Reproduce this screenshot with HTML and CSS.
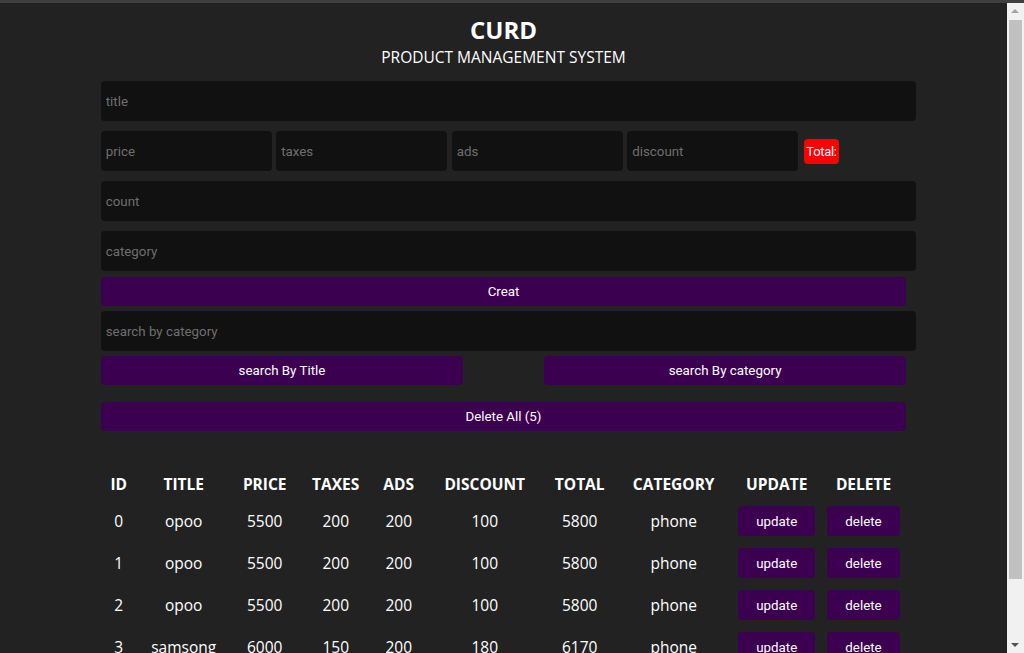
FILE: index.html
```html
<!DOCTYPE html>
<html lang="en">
<head>
<meta charset="utf-8">
<title>CURD</title>
<link rel="stylesheet" href="styles.css">
</head>
<body>
<div class="topline"></div>
<div class="scrollbar" aria-hidden="true">
  <span class="arrow arrow-up"></span>
  <span class="thumb"></span>
  <span class="arrow arrow-down"></span>
</div>
<div class="page">
  <div class="crud">
    <div class="head">
      <h2 class="brand">CURD</h2>
      <p class="subtitle">PRODUCT MANAGEMENT SYSTEM</p>
    </div>
    <div class="inputs">
      <input class="field" type="text" placeholder="title">
      <div class="price">
        <input class="field small" type="text" placeholder="price">
        <input class="field small" type="text" placeholder="taxes">
        <input class="field small" type="text" placeholder="ads">
        <input class="field small" type="text" placeholder="discount">
        <small class="total">Total:</small>
      </div>
      <input class="field" type="text" placeholder="count">
      <input class="field field-last" type="text" placeholder="category">
      <button class="btn btn-create">Creat</button>
    </div>
    <div class="outputs">
      <input class="field search" type="text" placeholder="search by category">
      <div class="btn-search">
        <button class="btn half">search By Title</button>
        <button class="btn half">search By category</button>
      </div>
      <button class="btn btn-delete-all">Delete All (5)</button>
      <table class="list">
        <colgroup>
          <col class="c-id"><col class="c-title"><col class="c-price"><col class="c-taxes"><col class="c-ads">
          <col class="c-discount"><col class="c-total"><col class="c-category"><col class="c-update"><col class="c-delete">
        </colgroup>
        <thead>
          <tr>
            <th>ID</th><th>TITLE</th><th>PRICE</th><th>TAXES</th><th>ADS</th><th>DISCOUNT</th><th>TOTAL</th><th>CATEGORY</th><th>UPDATE</th><th>DELETE</th>
          </tr>
        </thead>
        <tbody>
          <tr><td>0</td><td>opoo</td><td>5500</td><td>200</td><td>200</td><td>100</td><td>5800</td><td>phone</td><td><button class="btn row-btn">update</button></td><td><button class="btn row-btn">delete</button></td></tr>
          <tr><td>1</td><td>opoo</td><td>5500</td><td>200</td><td>200</td><td>100</td><td>5800</td><td>phone</td><td><button class="btn row-btn">update</button></td><td><button class="btn row-btn">delete</button></td></tr>
          <tr><td>2</td><td>opoo</td><td>5500</td><td>200</td><td>200</td><td>100</td><td>5800</td><td>phone</td><td><button class="btn row-btn">update</button></td><td><button class="btn row-btn">delete</button></td></tr>
          <tr><td>3</td><td>samsong</td><td>6000</td><td>150</td><td>200</td><td>180</td><td>6170</td><td>phone</td><td><button class="btn row-btn">update</button></td><td><button class="btn row-btn">delete</button></td></tr>
          <tr><td>4</td><td>samsong</td><td>6000</td><td>150</td><td>200</td><td>180</td><td>6170</td><td>phone</td><td><button class="btn row-btn">update</button></td><td><button class="btn row-btn">delete</button></td></tr>
        </tbody>
      </table>
    </div>
  </div>
</div>
</body>
</html>
```
FILE: styles.css
```css
* {
  margin: 0;
  padding: 0;
}

html, body {
  background: #222222;
}

body {
  color: #ffffff;
  font-family: "Open Sans", "Noto Sans", sans-serif;
}

.topline {
  position: fixed;
  top: 0;
  left: 0;
  right: 0;
  height: 3px;
  background: #3f3f41;
  z-index: 3;
}

.scrollbar {
  position: fixed;
  top: 3px;
  right: 0;
  bottom: 0;
  width: 17px;
  background: #f1f1f1;
  z-index: 2;
}

.thumb {
  position: absolute;
  left: 2px;
  right: 2px;
  top: 17px;
  height: 559px;
  background: #c1c1c1;
}

.arrow {
  position: absolute;
  left: 4px;
  width: 0;
  height: 0;
  border-left: 4px solid transparent;
  border-right: 4px solid transparent;
}

.arrow-up {
  top: 6px;
  border-bottom: 4px solid #a3a3a3;
}

.arrow-down {
  bottom: 6px;
  border-top: 4px solid #505050;
}

.page {
  margin-right: 17px;
  padding-top: 3px;
}

.crud {
  width: 80%;
  margin: 0 auto;
  padding-bottom: 13px;
}

.head {
  text-align: center;
  padding-top: 11px;
}

.brand {
  font-size: 24px;
  font-weight: 700;
  line-height: 32px;
}

.subtitle {
  font-size: 15.5px;
  line-height: 22px;
}

.inputs {
  margin-top: 13px;
}

.field {
  display: block;
  box-sizing: content-box;
  width: 100%;
  height: 30px;
  padding: 5px;
  border: none;
  outline: none;
  border-radius: 4px;
  background: #111111;
  color: #ffffff;
  font-family: Roboto, "Liberation Sans", sans-serif;
  font-size: 13.33px;
  margin-bottom: 10px;
}

.field::placeholder {
  color: #6f6f6f;
}

.price {
  display: flex;
  align-items: center;
  gap: 4.4px;
  height: 40px;
  margin-bottom: 10px;
}

.field.small {
  width: 20%;
  flex-shrink: 0;
  margin-bottom: 0;
}

.total {
  margin-left: 1.6px;
  background: #ff0000;
  color: #ffffff;
  font-family: Roboto, "Liberation Sans", sans-serif;
  font-size: 13px;
  letter-spacing: -0.3px;
  line-height: 17px;
  padding: 4px 2px;
  border-radius: 4px;
}

.field-last {
  margin-bottom: 6px;
}

.btn {
  border: none;
  border-radius: 4px;
  background: #3c0050;
  color: #ffffff;
  font-family: Roboto, "Liberation Sans", sans-serif;
  font-size: 13.33px;
  cursor: pointer;
}

.btn-create,
.btn-delete-all {
  display: block;
  width: 100%;
  height: 29px;
}

.outputs {
  margin-top: 5px;
}

.search {
  margin-bottom: 5px;
}

.btn-search {
  display: flex;
  justify-content: space-between;
}

.half {
  width: 45%;
  height: 29px;
}

.btn-delete-all {
  margin-top: 17px;
}

.list {
  width: 100%;
  margin-top: 37px;
  border-collapse: collapse;
  table-layout: fixed;
  text-align: center;
}

.list th {
  height: 32px;
  font-size: 15.5px;
  font-weight: 700;
  padding: 0;
}

.list td {
  height: 42px;
  font-size: 15.5px;
  padding: 0;
}

.row-btn {
  height: 30px;
  padding: 0 18px;
  vertical-align: middle;
}

.c-id { width: 36px; }
.c-title { width: 94px; }
.c-price { width: 68px; }
.c-taxes { width: 74px; }
.c-ads { width: 52px; }
.c-discount { width: 120px; }
.c-total { width: 70px; }
.c-category { width: 118px; }
.c-update { width: 88px; }
.c-delete { width: auto; }
```
